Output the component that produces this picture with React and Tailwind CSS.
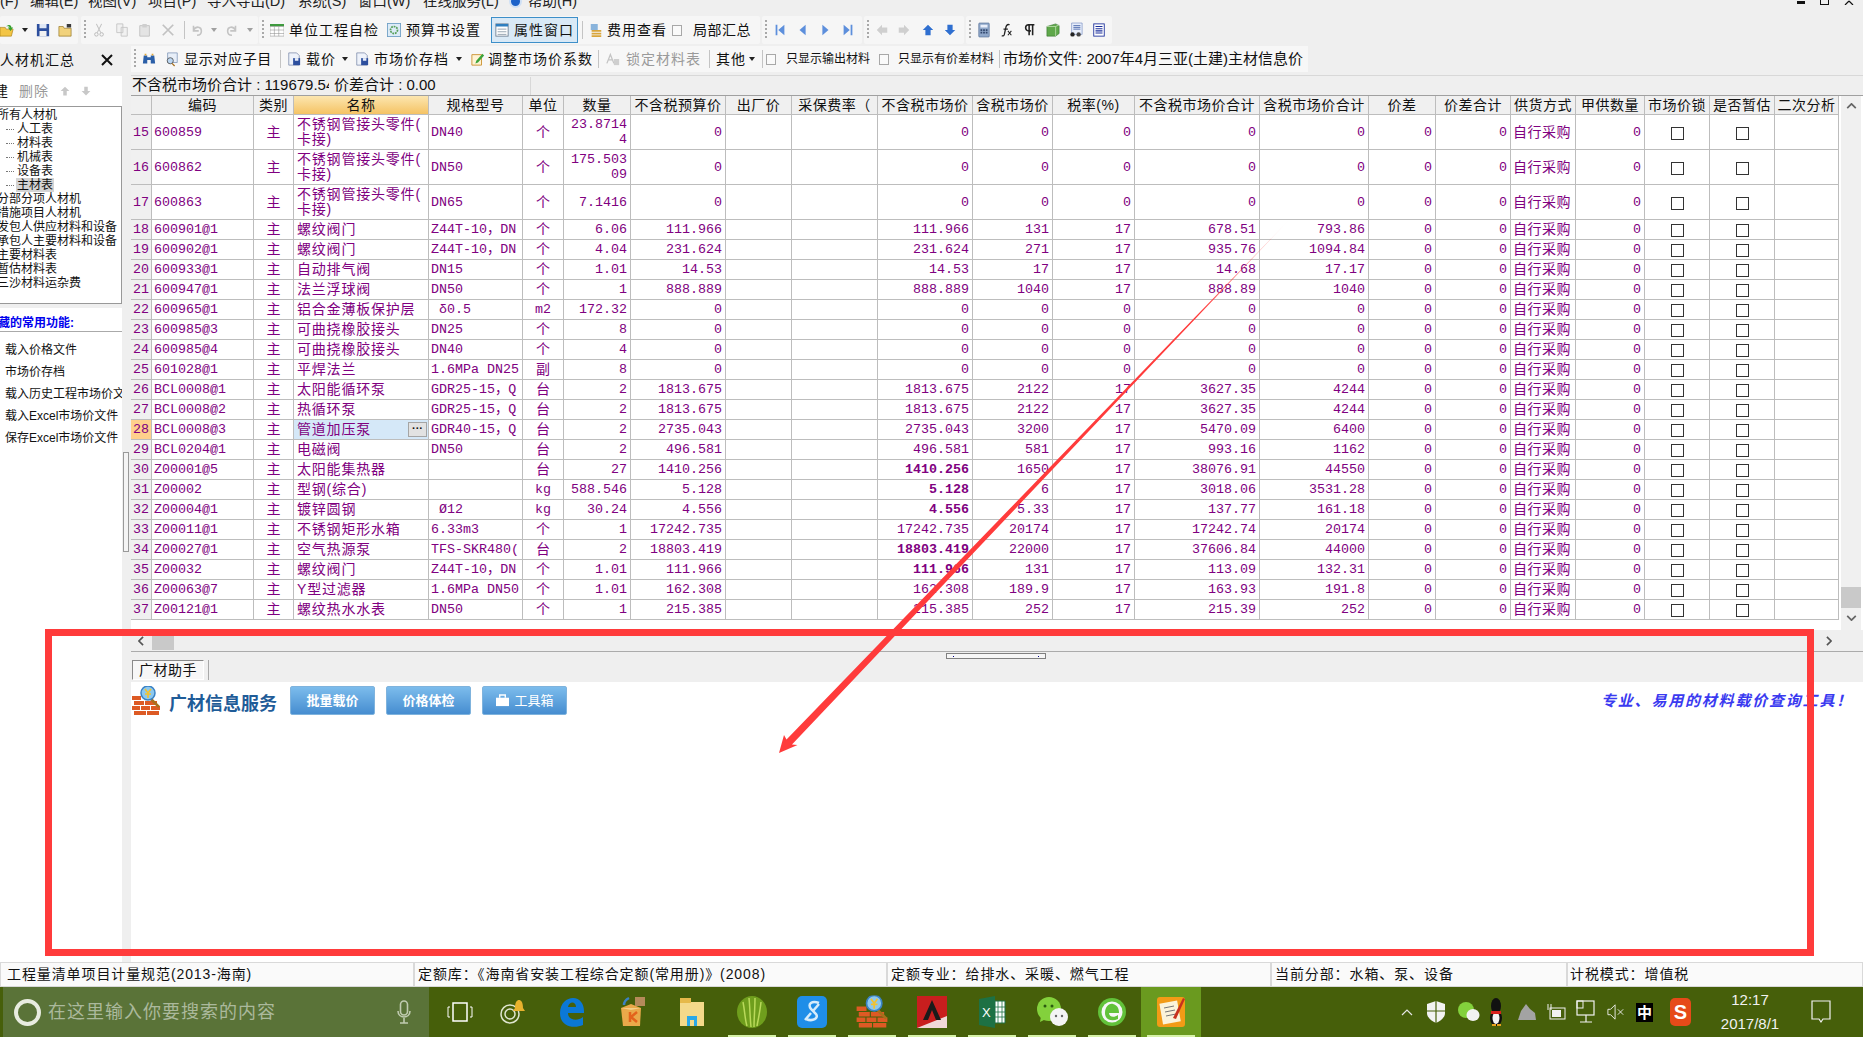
import React from "react";

const Ic = ({ children, className = "" }) => (
  <svg viewBox="0 0 16 16" className={"w-[14px] h-[16px] shrink-0 " + className}>{children}</svg>
);
const Caret = ({ className = "" }) => (
  <svg viewBox="0 0 6 4" className={"w-[6px] h-[4px] shrink-0 " + className}><path d="M0 0h6L3 4z" fill="#222" /></svg>
);
const Grip = ({ className = "" }) => (
  <span className={"w-[2px] h-[20px] shrink-0 bg-[repeating-linear-gradient(to_bottom,#a8a8a8_0,#a8a8a8_2px,transparent_2px,transparent_4px)] " + className} />
);
const Sep = ({ className = "" }) => <span className={"w-px h-[18px] shrink-0 bg-[#c4c4c4] " + className} />;
const Box = ({ className = "" }) => <span className={"w-[10px] h-[11px] shrink-0 border border-[#a8a8a8] bg-[#fafafa] " + className} />;
const T = ({ className = "", look = "text-[14px] tracking-[1px] text-[#111]", children }) => <span className={"whitespace-nowrap shrink-0 " + look + " " + className}>{children}</span>;

const FolderIc = (p) => <Ic {...p}><path d="M0 5h6l1 2h8l-2 8H0z" fill="#f3c545" stroke="#a67c12" strokeWidth=".7" /><path d="M7 4c3-3 6-2 6 1h2l-3 4-3-4h2c0-1-2-2-4-1z" fill="#37a12d" /></Ic>;
const SaveIc = (p) => <Ic {...p}><path d="M1 1h14v14H1z" fill="#2d4f9e" /><path d="M4 1h8v5H4z" fill="#dfe7f5" /><path d="M4 9h8v6H4z" fill="#f2f2f2" /></Ic>;
const OpenIc = (p) => <Ic {...p}><path d="M1 4h5l1 2h8v9H1z" fill="#f1d27c" stroke="#8a6a18" strokeWidth=".7" /><path d="M10 1h5v4h-5z" fill="#3a3a3a" /></Ic>;
const Scissors = (p) => <Ic {...p}><path d="M5 1l5 10M11 1L6 11" stroke="#c0c0c0" strokeWidth="1.2" fill="none" /><circle cx="5" cy="13" r="2" fill="none" stroke="#b5b5b5" /><circle cx="11" cy="13" r="2" fill="none" stroke="#b5b5b5" /></Ic>;
const CopyIc = (p) => <Ic {...p}><path d="M2 1h7v10H2zM7 5h7v10H7z" fill="#f1f1f1" stroke="#c4c4c4" /></Ic>;
const PasteIc = (p) => <Ic {...p}><path d="M2 3h11v12H2z" fill="#e4e4e4" stroke="#c0c0c0" /><path d="M5 1h5v4H5z" fill="#cfcfcf" /></Ic>;
const CloseIc = (p) => <Ic {...p}><path d="M2 2l12 12M14 2L2 14" stroke="#c2c2c2" strokeWidth="2" /></Ic>;
const UndoIc = (p) => <Ic {...p}><path d="M4 3v6h6M4 8c3-5 9-4 9 1s-3 5-5 5" fill="none" stroke="#c4c4c4" strokeWidth="1.8" /></Ic>;
const RedoIc = (p) => <Ic {...p}><path d="M12 3v6H6M12 8C9 3 3 4 3 9s3 5 5 5" fill="none" stroke="#c4c4c4" strokeWidth="1.8" /></Ic>;
const GridIc = (p) => <Ic {...p}><path d="M0 1h16v3H0z" fill="#3f9a3f" /><path d="M0 4h16v11H0z" fill="#fff" stroke="#8a8a8a" strokeWidth=".6" /><path d="M5 4v11M10 4v11M0 8h16M0 12h16" stroke="#8a8a8a" strokeWidth=".6" /></Ic>;
const GearIc = (p) => <Ic {...p}><rect x=".5" y=".5" width="15" height="15" fill="#dcebf7" stroke="#6f9fc5" /><circle cx="8" cy="8" r="4" fill="none" stroke="#58a05a" strokeWidth="2" strokeDasharray="2 1" /></Ic>;
const WinIc = (p) => <Ic {...p}><rect x="1" y="1" width="14" height="14" fill="#fff" stroke="#6d7f90" /><path d="M1 1h14v3H1z" fill="#2e7fc0" /><path d="M3 7h10M3 10h10M3 13h10" stroke="#8a9aa8" /></Ic>;
const CoinIc = (p) => <Ic {...p}><path d="M2 1h8v7H2z" fill="#8ab4dc" /><path d="M3 8h11v2H3zM3 11h11v2H3zM3 14h11v2H3z" fill="#d9a53a" /></Ic>;
const Nav = ({ d, c = "#5d8fdc", ...p }) => <Ic {...p}><path d={d} fill={c} /></Ic>;
const CalcIc = (p) => <Ic {...p}><rect x="2" y="0" width="12" height="16" rx="1" fill="#8fa7c9" stroke="#4f6a93" strokeWidth=".7" /><path d="M4 2h8v3H4z" fill="#e8eefa" /><path d="M4 7h2v2H4zM7 7h2v2H7zM10 7h2v2h-2zM4 10h2v2H4zM7 10h2v2H7zM10 10h2v2h-2z" fill="#33486e" /></Ic>;
const FxIc = (p) => <Ic {...p}><path d="M11 2c-3-1-4 1-4.500 4L5 13c-.5 2-2 2-3 1.500M4 7h5" stroke="#222" strokeWidth="1.500" fill="none" /><path d="M9 9l4 5M13 9l-4 5" stroke="#222" strokeWidth="1.200" /></Ic>;
const PilcrowIc = (p) => <Ic {...p}><path d="M7 2v12M11 2v12M13 2H6.500a3.500 3.500 0 0 0 0 7H9" stroke="#222" strokeWidth="1.800" fill="none" /></Ic>;
const CubeIc = (p) => <Ic {...p}><path d="M1 4l10-3 4 2v9l-4 3H1z" fill="#5fa84a" stroke="#2f6b2a" strokeWidth=".6" /><path d="M1 4h10v11M11 4l4-2" stroke="#cfe8c0" strokeWidth=".8" fill="none" /></Ic>;
const DocIc = (p) => <Ic {...p}><path d="M3 0h12v13H3z" fill="#e8eefb" stroke="#6c86bd" strokeWidth=".7" /><path d="M5 3h8M5 5h8M5 7h8" stroke="#4462a8" /><circle cx="4" cy="13" r="2.500" fill="#222" /><circle cx="11" cy="13" r="2.500" fill="#444" /></Ic>;
const ListIc = (p) => <Ic {...p}><rect x="2" y="1" width="12" height="14" fill="#fff" stroke="#1b2f9b" /><path d="M4 4h8M4 6.500h8M4 9h8M4 11.500h8" stroke="#1b2f9b" strokeWidth="1.200" /></Ic>;
const Binoc = (p) => <Ic {...p}><path d="M2 4h4v9H1zM10 4h4l1 9h-5zM6 6h4v3H6z" fill="#2b5fa8" /><path d="M3 2h2v2H3zM11 2h2v2h-2z" fill="#e0a63a" /></Ic>;
const FindDoc = (p) => <Ic {...p}><path d="M3 1h11v11H3z" fill="#e7eef8" stroke="#5f7ba5" strokeWidth=".7" /><circle cx="6" cy="10" r="3.500" fill="#bcd7f2" stroke="#555" /><path d="M8 13l3 3" stroke="#a8701c" strokeWidth="1.500" /></Ic>;
const DiskDoc = (p) => <Ic {...p}><path d="M2 1h9l3 3v11H2z" fill="#eef2fa" stroke="#5d6f96" strokeWidth=".7" /><path d="M7 7h8v8H7z" fill="#2d4f9e" /><path d="M9 7h4v3H9z" fill="#e8eefb" /></Ic>;
const EditDoc = (p) => <Ic {...p}><path d="M1 3h11v12H1z" fill="#fff3d4" stroke="#c98f2b" /><path d="M6 10l7-8 2 2-7 8-3 1z" fill="#3da43a" /></Ic>;
const GreyAb = (p) => <Ic {...p}><path d="M1 13L5 3l4 10M3 9h4" stroke="#c4c4c4" strokeWidth="1.500" fill="none" /><rect x="9" y="8" width="6" height="7" fill="#cfcfcf" /></Ic>;

const widths = ["w-[21px]", "w-[102px]", "w-[40px]", "w-[135px]", "w-[94px]", "w-[41px]", "w-[67px]", "w-[95px]", "w-[66px]", "w-[86px]", "w-[95px]", "w-[80px]", "w-[82px]", "w-[125px]", "w-[109px]", "w-[67px]", "w-[75px]", "w-[65px]", "w-[69px]", "w-[65px]", "w-[65px]", "w-[64px]"];
const heads = ["", "编码", "类别", "名称", "规格型号", "单位", "数量", "不含税预算价", "出厂价", "采保费率（", "不含税市场价", "含税市场价", "税率(%)", "不含税市场价合计", "含税市场价合计", "价差", "价差合计", "供货方式", "甲供数量", "市场价锁", "是否暂估", "二次分析"];

const TG = "Z44T-10，DN";
const rows = [
  [15, "600859", "不锈钢管接头零件(\n卡接)", "DN40", "个", "23.8714\n4", "0", "0", "0", "0", "0", "0"],
  [16, "600862", "不锈钢管接头零件(\n卡接)", "DN50", "个", "175.503\n09", "0", "0", "0", "0", "0", "0"],
  [17, "600863", "不锈钢管接头零件(\n卡接)", "DN65", "个", "7.1416", "0", "0", "0", "0", "0", "0"],
  [18, "600901@1", "螺纹阀门", TG, "个", "6.06", "111.966", "111.966", "131", "17", "678.51", "793.86"],
  [19, "600902@1", "螺纹阀门", TG, "个", "4.04", "231.624", "231.624", "271", "17", "935.76", "1094.84"],
  [20, "600933@1", "自动排气阀", "DN15", "个", "1.01", "14.53", "14.53", "17", "17", "14.68", "17.17"],
  [21, "600947@1", "法兰浮球阀", "DN50", "个", "1", "888.889", "888.889", "1040", "17", "888.89", "1040"],
  [22, "600965@1", "铝合金薄板保护层", " δ0.5", "m2", "172.32", "0", "0", "0", "0", "0", "0"],
  [23, "600985@3", "可曲挠橡胶接头", "DN25", "个", "8", "0", "0", "0", "0", "0", "0"],
  [24, "600985@4", "可曲挠橡胶接头", "DN40", "个", "4", "0", "0", "0", "0", "0", "0"],
  [25, "601028@1", "平焊法兰", "1.6MPa DN25", "副", "8", "0", "0", "0", "0", "0", "0"],
  [26, "BCL0008@1", "太阳能循环泵", "GDR25-15，Q", "台", "2", "1813.675", "1813.675", "2122", "17", "3627.35", "4244"],
  [27, "BCL0008@2", "热循环泵", "GDR25-15，Q", "台", "2", "1813.675", "1813.675", "2122", "17", "3627.35", "4244"],
  [28, "BCL0008@3", "管道加压泵", "GDR40-15，Q", "台", "2", "2735.043", "2735.043", "3200", "17", "5470.09", "6400"],
  [29, "BCL0204@1", "电磁阀", "DN50", "台", "2", "496.581", "496.581", "581", "17", "993.16", "1162"],
  [30, "Z00001@5", "太阳能集热器", "", "台", "27", "1410.256", "*1410.256", "1650", "17", "38076.91", "44550"],
  [31, "Z00002", "型钢(综合)", "", "kg", "588.546", "5.128", "*5.128", "6", "17", "3018.06", "3531.28"],
  [32, "Z00004@1", "镀锌圆钢", " Ø12", "kg", "30.24", "4.556", "*4.556", "5.33", "17", "137.77", "161.18"],
  [33, "Z00011@1", "不锈钢矩形水箱", "6.33m3", "个", "1", "17242.735", "17242.735", "20174", "17", "17242.74", "20174"],
  [34, "Z00027@1", "空气热源泵", "TFS-SKR480(", "台", "2", "18803.419", "*18803.419", "22000", "17", "37606.84", "44000"],
  [35, "Z00032", "螺纹阀门", TG, "个", "1.01", "111.966", "*111.966", "131", "17", "113.09", "132.31"],
  [36, "Z00063@7", "Y型过滤器", "1.6MPa DN50", "个", "1.01", "162.308", "162.308", "189.9", "17", "163.93", "191.8"],
  [37, "Z00121@1", "螺纹热水水表", "DN50", "个", "1", "215.385", "215.385", "252", "17", "215.39", "252"],
];

const cell = "p-0 border-r border-b border-[#bdbdbd] overflow-hidden align-middle";
const mono = "font-['Liberation_Mono','Noto_Sans_CJK_SC',monospace] text-[13.33px]";
const cjk = "text-[14px] tracking-[0.8px]";

const Num = ({ v }) => {
  const bold = v.startsWith("*");
  return <td className={cell + " text-right pr-[3px] whitespace-pre-line " + mono + (bold ? " font-bold" : "")}>{bold ? v.slice(1) : v}</td>;
};
const Check = () => (
  <td className={cell + " text-center"}><span className="inline-block align-middle w-[13px] h-[13px] border border-[#333] bg-white" /></td>
);

const Row = ({ r }) => {
  const [n, code, name, spec, unit, qty, bud, mkt, tax, rate, s1, s2] = r;
  const sel = n === 28;
  const tall = n < 18;
  return (
    <tr className={tall ? "h-[35px]" : "h-[20px]"}>
      <td className={cell + " text-center " + mono + (sel ? " bg-[#ffd08c]" : " bg-[#f0f0f0]")}>{n}</td>
      <td className={cell + " pl-[2px] whitespace-nowrap " + mono}>{code}</td>
      <td className={cell + " text-center text-[14px]"}>主</td>
      <td className={cell + " pl-[3px] whitespace-pre-line " + cjk + (sel ? " bg-[#d5e8f8]" : "")}>
        {sel ? (
          <div className="flex items-center justify-between pr-px"><span>{name}</span><span className="w-[19px] h-[15px] bg-[#e2e2e2] border border-[#a5a5a5] text-[#111] text-[11px] leading-[10px] text-center font-bold tracking-normal">···</span></div>
        ) : name}
      </td>
      <td className={cell + " pl-[2px] whitespace-pre " + mono}>{spec}</td>
      <td className={cell + " text-center " + (unit.length > 1 ? mono : "text-[14px]")}>{unit}</td>
      <Num v={qty} />
      <Num v={bud} />
      <td className={cell} />
      <td className={cell} />
      <Num v={mkt} />
      <Num v={tax} />
      <Num v={rate} />
      <Num v={s1} />
      <Num v={s2} />
      <Num v="0" />
      <Num v="0" />
      <td className={cell + " pl-[2px] whitespace-nowrap text-[14px] tracking-[0.5px]"}>自行采购</td>
      <Num v="0" />
      <Check />
      <Check />
      <td className={cell} />
    </tr>
  );
};

const Grid = () => (
  <table className="table-fixed border-separate border-spacing-0 w-[1708px] text-[#800080] leading-[15px] bg-white">
    <colgroup>{widths.map((w, i) => <col key={i} className={w} />)}</colgroup>
    <thead>
      <tr className="h-[19px]">
        {heads.map((h, i) => (
          <th key={i} className={"p-0 font-normal text-[14px] tracking-[0.5px] text-[#111] whitespace-nowrap overflow-hidden text-center border-r border-b border-[#bdbdbd] " + (i === 3 ? "bg-[linear-gradient(to_bottom,#fce6b0,#f5c364)]" : "bg-[#f0f0f0]")}>{h}</th>
        ))}
      </tr>
    </thead>
    <tbody>{rows.map((r) => <Row key={r[0]} r={r} />)}</tbody>
  </table>
);

const Menu = () => (
  <div className="h-[16px] overflow-hidden relative flex text-[14.5px] leading-[14px] text-[#222] whitespace-nowrap">
    <div className="flex -mt-[6px]">
      <span className="w-[30px]">(F)</span>
      <span className="w-[58px]">编辑(E)</span>
      <span className="w-[60px]">视图(V)</span>
      <span className="w-[59px]">项目(P)</span>
      <span className="w-[91px]">导入导出(D)</span>
      <span className="w-[60px]">系统(S)</span>
      <span className="w-[65px]">窗口(W)</span>
      <span className="w-[86px]">在线服务(L)</span>
      <span className="w-[13px] h-[13px] rounded-full bg-[#1c62c9] border-2 border-[#cfe0f5] mr-[6px] mt-[1px]" />
      <span>帮助(H)</span>
    </div>
    <div className="absolute right-[9px] top-0 flex items-start gap-[15px]">
      <span className="w-[8px] h-[3px] mt-px bg-[#111]" />
      <span className="w-[9px] h-[5px] border border-t-0 border-[#111]" />
      <svg viewBox="0 0 10 5" className="w-[10px] h-[5px]"><path d="M1 5l4-4M9 5L5 1" stroke="#111" strokeWidth="1.200" /></svg>
    </div>
  </div>
);

const band = "h-[28px] bg-[#f6f6f6] flex items-center shrink-0 overflow-hidden rounded-[2px]";

const Toolbar1 = () => (
  <div className="h-[30px] flex">
    <div className={band + " w-[78px]"}>
      <FolderIc /><Caret className="ml-[8px]" /><SaveIc className="ml-[8px]" /><OpenIc className="ml-[8px]" />
    </div>
    <div className={band + " w-[177px] ml-[3px]"}>
      <Grip className="ml-[3px]" /><Scissors className="ml-[6px]" /><CopyIc className="ml-[9px]" /><PasteIc className="ml-[9px]" /><CloseIc className="ml-[9px]" />
      <Sep className="ml-[9px]" /><UndoIc className="ml-[5px]" /><Caret className="ml-[7px] opacity-40" /><RedoIc className="ml-[8px]" /><Caret className="ml-[8px] opacity-40" />
    </div>
    <div className={band + " w-[501px] ml-px"}>
      <Grip className="ml-[3px]" /><GridIc className="ml-[6px]" /><T className="ml-[5px]">单位工程自检</T>
      <GearIc className="ml-[8px]" /><T className="ml-[5px]">预算书设置</T>
      <div className="ml-[10px] w-[87px] h-[26px] bg-[#d9e9f6] border border-[#3d8fc9] flex items-center shrink-0">
        <WinIc className="ml-[3px]" /><T className="ml-[5px]">属性窗口</T>
      </div>
      <Sep className="ml-[4px]" /><CoinIc className="ml-[6px]" /><T className="ml-[4px]">费用查看</T>
      <Box className="ml-[5px]" /><T className="ml-[11px]" look="text-[14px] tracking-[0.5px] text-[#111]">局部汇总</T>
    </div>
    <div className={band + " w-[100px] ml-[2px]"}>
      <Grip className="ml-[3px]" />
      <Nav d="M3 2h2v12H3zM13 2v12L6 8z" className="ml-[6px]" />
      <Nav d="M11 2v12L4 8z" className="ml-[9px]" />
      <Nav d="M5 2v12l7-6z" className="ml-[8px]" />
      <Nav d="M11 2h2v12h-2zM3 2v12l7-6z" className="ml-[9px]" />
    </div>
    <div className={band + " w-[100px] ml-[2px]"}>
      <Grip className="ml-[3px]" />
      <Nav c="#cfcfcf" d="M8 2v3h6v6H8v3L2 8z" className="ml-[6px]" />
      <Nav c="#cfcfcf" d="M8 2v3H2v6h6v3l6-6z" className="ml-[8px]" />
      <Nav c="#2f6fd0" d="M8 2l6 6h-3v6H5V8H2z" className="ml-[10px]" />
      <Nav c="#2f6fd0" d="M8 14l6-6h-3V2H5v6H2z" className="ml-[8px]" />
    </div>
    <div className={band + " w-[146px] ml-[2px]"}>
      <Grip className="ml-[3px]" /><CalcIc className="ml-[6px]" /><FxIc className="ml-[9px]" /><PilcrowIc className="ml-[9px]" /><CubeIc className="ml-[9px]" /><DocIc className="ml-[9px]" /><ListIc className="ml-[9px]" />
    </div>
  </div>
);

const small = "text-[12px] tracking-normal text-[#111]";

const Toolbar2 = () => (
  <div className="h-[29px] flex items-start">
    <div className="h-[26px] w-[1177px] bg-[#f7f7f7] flex items-center overflow-hidden">
      <Grip className="ml-[3px]" /><Binoc className="ml-[6px]" /><FindDoc className="ml-[9px]" /><T className="ml-[5px]" look="text-[14px] tracking-[0.67px] text-[#111]">显示对应子目</T>
      <Sep className="ml-[8px]" /><DiskDoc className="ml-[6px]" /><T className="ml-[5px]">载价</T><Caret className="ml-[6px]" />
      <DiskDoc className="ml-[7px]" /><T className="ml-[5px]">市场价存档</T><Caret className="ml-[7px]" />
      <EditDoc className="ml-[9px]" /><T className="ml-[3px]">调整市场价系数</T>
      <Sep className="ml-[5px]" /><GreyAb className="ml-[7px]" /><T className="ml-[6px]" look="text-[14px] tracking-[1px] text-[#9a9a9a]">锁定材料表</T>
      <Sep className="ml-[8px]" /><T className="ml-[6px]">其他</T><Caret className="ml-[3px]" />
      <Sep className="ml-[7px]" /><Box className="ml-[3px]" /><T className="ml-[10px]" look={small}>只显示输出材料</T>
      <Box className="ml-[9px]" /><T className="ml-[9px]" look={small}>只显示有价差材料</T>
      <Sep className="ml-[5px]" /><span className="ml-[3px] whitespace-nowrap text-[15px] text-[#111]">市场价文件: 2007年4月三亚(土建)主材信息价</span>
    </div>
  </div>
);

const SumLine = () => (
  <div className="h-[20px] border-t border-[#d8d8d8] flex items-center text-[15px] text-[#111] whitespace-nowrap">
    <span className="w-[198px] overflow-hidden pl-px shrink-0">不含税市场价合计 : 119679.54</span>
    <span className="ml-[5px] w-[196px] shrink-0">价差合计 : 0.00</span>
    <span className="w-px h-[18px] bg-[#d8d8d8]" />
  </div>
);

const Tree = () => {
  const top = ["所有人材机"];
  const kids = ["人工表", "材料表", "机械表", "设备表", "主材表"];
  const rest = ["分部分项人材机", "措施项目人材机", "发包人供应材料和设备", "承包人主要材料和设备", "主要材料表", "暂估材料表", "三沙材料运杂费"];
  return (
    <div className="h-[198px] border border-l-0 border-[#999] bg-white text-[12px] leading-[14px] text-[#111] pt-[1px] overflow-hidden whitespace-nowrap">
      {top.map((t) => <div key={t} className="-ml-[3px]">{t}</div>)}
      {kids.map((t, i) => (
        <div key={t} className="flex items-center h-[14px]">
          <span className="ml-[6px] w-[8px] border-t border-dotted border-[#777]" />
          <span className={"ml-[2px] px-px " + (i === 4 ? "bg-[#d4d4d4]" : "")}>{t}</span>
        </div>
      ))}
      {rest.map((t) => <div key={t} className="-ml-[3px]">{t}</div>)}
    </div>
  );
};

const Left = () => (
  <div className="w-[131px] shrink-0 flex">
    <div className="w-[122px] shrink-0 flex flex-col">
      <div className="h-[30px] flex items-start pt-[4px] text-[14px] tracking-[1px] text-[#111] whitespace-nowrap relative w-[131px]">
        <span>人材机汇总</span>
        <svg viewBox="0 0 12 12" className="absolute left-[101px] top-[8px] w-[12px] h-[12px]"><path d="M1 1l10 10M11 1L1 11" stroke="#111" strokeWidth="2" /></svg>
      </div>
      <div className="h-[30px] bg-white flex items-center text-[14px] whitespace-nowrap">
        <span className="-ml-[6px] text-[#111]">建</span>
        <span className="ml-[11px] text-[#999] tracking-[1px]">删除</span>
        <Nav c="#c8c8c8" d="M8 3l5 5h-3v5H6V8H3z" className="ml-[9px]" />
        <Nav c="#c8c8c8" d="M8 13l5-5h-3V3H6v5H3z" className="ml-[7px]" />
      </div>
      <Tree />
      <div className="h-[4px] bg-[#efefef]" />
      <div className="flex-1 bg-white overflow-hidden whitespace-nowrap text-[12px] text-[#111]">
        <div className="h-[24px] border-b border-[#aaa] flex items-end text-[#0000ee] font-bold -ml-[4px]">
          <span className="pl-[2px] leading-[15px]">藏的常用功能:</span>
        </div>
        <div className="pl-[5px] flex flex-col pt-[7px] leading-[22px]">
          <span>载入价格文件</span>
          <span>市场价存档</span>
          <span>载入历史工程市场价文件</span>
          <span>载入Excel市场价文件</span>
          <span>保存Excel市场价文件</span>
        </div>
      </div>
    </div>
    <div className="w-[9px] shrink-0 relative">
      <span className="absolute left-px top-[406px] w-[6px] h-[100px] border border-[#999] bg-[#f4f4f4]" />
    </div>
  </div>
);

const VScroll = () => (
  <div className="w-[24px] shrink-0 flex flex-col items-center bg-[#f0f0f0] border-r-2 border-l-2 border-white relative h-[534px]">
    <svg viewBox="0 0 12 7" className="w-[11px] h-[6px] mt-[7px]"><path d="M1 6l5-5 5 5" fill="none" stroke="#666" strokeWidth="2" /></svg>
    <span className="absolute left-0 right-0 top-[491px] h-[21px] bg-[#c9c9c9]" />
    <svg viewBox="0 0 12 7" className="w-[11px] h-[6px] absolute top-[519px]"><path d="M1 1l5 5 5-5" fill="none" stroke="#666" strokeWidth="2" /></svg>
  </div>
);

const HScroll = () => (
  <div className="h-[22px] border-b border-[#ababab] flex items-end relative">
    <svg viewBox="0 0 7 12" className="absolute left-[7px] top-[6px] w-[6px] h-[10px]"><path d="M6 1L1 6l5 5" fill="none" stroke="#555" strokeWidth="2" /></svg>
    <span className="absolute left-[21px] top-[6px] w-[22px] h-[14px] bg-[#c9c9c9]" />
    <svg viewBox="0 0 7 12" className="absolute left-[1695px] top-[6px] w-[6px] h-[10px]"><path d="M1 1l5 5-5 5" fill="none" stroke="#555" strokeWidth="2" /></svg>
  </div>
);

const Btn = ({ children, className = "", weight = "font-bold" }) => (
  <div className={"w-[85px] h-[29px] rounded-[2px] bg-[linear-gradient(to_bottom,#7cbcec,#468dd0)] border border-[#7fb3dd] text-white text-[13px] flex items-center justify-center gap-[4px] whitespace-nowrap shrink-0 " + weight + " " + className}>{children}</div>
);

const Logo = () => (
  <svg viewBox="0 0 30 30" className="w-[30px] h-[30px] shrink-0">
    <path d="M1 10h9v4H1zM3 15h10v4H3zM1 20h8v4H1zM10 20h9v4h-9zM20 20h9v4h-9zM14 15h12v4H14zM3 25h12v4H3zM16 25h12v4H16z" fill="#dd5a24" />
    <path d="M19 12l9 9" stroke="#a8701c" strokeWidth="2.500" />
    <circle cx="17" cy="7" r="7" fill="#8cc8ef" stroke="#3a82c4" strokeWidth="1.500" />
    <path d="M14 3l3 4 3-4M17 7v5M14 8h6" stroke="#f2c230" strokeWidth="1.600" fill="none" />
  </svg>
);

const Bottom = () => (
  <div className="flex-1 flex flex-col min-h-0">
    <div className="h-[8px] relative">
      <span className="absolute left-[815px] top-px w-[100px] h-[6px] border border-[#808080] bg-[#f6f6f6] flex justify-between px-[6px] items-center">
        <i className="w-px h-px bg-[#00008b]" /><i className="w-px h-px bg-[#00008b]" />
      </span>
    </div>
    <div className="h-[22px] flex items-start pl-px">
      <div className="w-[72px] h-[20px] border border-[#8a8a8a] border-b-white border-r-white bg-[#f7f7f7] text-[14px] tracking-[0.5px] text-[#111] flex items-center justify-center">广材助手</div>
      <span className="ml-[4px] w-px h-[20px] bg-[#a8a8a8]" />
    </div>
    <div className="flex-1 bg-white flex items-start pt-[4px] pr-[10px] whitespace-nowrap">
      <Logo />
      <span className="ml-[8px] mt-[5px] text-[18px] font-bold text-[#1f5c98]">广材信息服务</span>
      <Btn className="ml-[13px]">批量载价</Btn>
      <Btn className="ml-[11px]">价格体检</Btn>
      <Btn className="ml-[11px]" weight="font-normal">
        <svg viewBox="0 0 16 14" className="w-[15px] h-[13px]"><path d="M1 4h14v9H1z" fill="#fff" /><path d="M5 4V1h6v3" fill="none" stroke="#fff" strokeWidth="1.500" /></svg>
        工具箱
      </Btn>
      <span className="ml-auto mt-[4px] text-[15px] italic font-bold tracking-[1.800px] text-[#3a3af0]">专业、易用的材料载价查询工具！</span>
    </div>
  </div>
);

const StatusBar = () => {
  const items = [["w-[414px]", "pl-[6px]", "工程量清单项目计量规范(2013-海南)"], ["w-[473px]", "pl-[3px]", "定额库：《海南省安装工程综合定额(常用册)》(2008)"], ["w-[384px]", "pl-[3px]", "定额专业：给排水、采暖、燃气工程"], ["w-[296px]", "pl-[3px]", "当前分部：水箱、泵、设备"], ["w-[296px]", "pl-[2px]", "计税模式：增值税"]];
  return (
    <div className="h-[25px] flex text-[14px] tracking-[0.9px] text-[#111] whitespace-nowrap bg-[#efefef]">
      {items.map(([w, p, t]) => <div key={t} className={w + " " + p + " h-full border border-[#d9d9d9] bg-[#fafafa] flex items-center shrink-0 overflow-hidden"}>{t}</div>)}
    </div>
  );
};

const Tile = ({ children, active, line, className = "", w = "w-[60px]" }) => (
  <div className={w + " h-full flex items-center justify-center shrink-0 relative " + (active ? "bg-[#6a9a1f] " : "") + className}>
    {children}
    {line && <span className="absolute bottom-0 left-[6px] right-[6px] h-[2px] bg-[#d6f2a8]" />}
  </div>
);
const TI = ({ children }) => <svg viewBox="0 0 32 32" className="w-[32px] h-[32px]">{children}</svg>;

const Taskbar = () => (
  <div className="h-[50px] bg-[#465f0a] flex items-stretch text-white whitespace-nowrap">
    <div className="ml-[3px] w-[426px] bg-[#5a7338] flex items-center shrink-0">
      <span className="ml-[11px] w-[27px] h-[27px] rounded-full border-[4px] border-[#e8ece0]" />
      <span className="ml-[7px] text-[18px] tracking-[1px] text-[#abb99c]">在这里输入你要搜索的内容</span>
      <svg viewBox="0 0 14 24" className="ml-auto mr-[18px] w-[14px] h-[24px]"><rect x="3.500" y="1" width="7" height="14" rx="3.500" fill="none" stroke="#c0cbb0" strokeWidth="1.600" /><path d="M1 11c0 8 12 8 12 0M7 18v5M3 23h8" fill="none" stroke="#c0cbb0" strokeWidth="1.600" /></svg>
    </div>
    <Tile className="ml-px">
      <svg viewBox="0 0 26 24" className="w-[26px] h-[24px]"><rect x="6" y="3" width="14" height="18" fill="none" stroke="#fff" strokeWidth="1.500" /><path d="M3 7H1v10h2M23 7h2v10h-2" fill="none" stroke="#fff" /></svg>
    </Tile>
    <Tile w="w-[52px]" className="pr-[6px]">
      <TI><circle cx="13" cy="18" r="9" fill="none" stroke="#dfe5cf" strokeWidth="1.500" /><circle cx="13" cy="18" r="5" fill="none" stroke="#dfe5cf" strokeWidth="1.500" /><path d="M18 12c0-6 2-8 4-8s4 2 4 8l2 3H16z" fill="#e8b22d" /></TI>
    </Tile>
    <Tile w="w-[60px]">
      <TI><path d="M4 17C4 7 11 2 17 2c7 0 11 6 11 13v2H12c0 7 9 9 15 4v8c-9 4-23 2-23-12zm8-6h8c0-6-7-6-8 0z" fill="#0b78d6" /></TI>
    </Tile>
    <Tile>
      <TI><path d="M5 12l10-4 10 4-1 18H7z" fill="#eaa94a" /><path d="M5 12l10 2 10-2" fill="#f3cf86" /><path d="M14 16v10M21 16l-6 5 6 5" stroke="#e3631c" strokeWidth="2.500" fill="none" /><path d="M19 1h10v9H19z" fill="#b58a5a" /><path d="M8 9c0-4 3-6 5-7" stroke="#3b82c4" strokeWidth="2.500" fill="none" /></TI>
    </Tile>
    <Tile>
      <TI><path d="M4 6h24v24H4z" fill="#f4d98a" /><path d="M4 2h11v5H4z" fill="#e6b94a" /><path d="M11 20h10v10H11z" fill="#2aa8e8" /><path d="M14 24h4v6h-4z" fill="#f4d98a" /></TI>
    </Tile>
    <Tile line>
      <svg viewBox="0 0 30 32" className="w-[30px] h-[32px]"><ellipse cx="15" cy="16" rx="15" ry="16" fill="#6f9e1d" /><path d="M6 6c2 10 2 18 4 24M12 2c1 10 1 20 2 29M18 2c0 10-1 20-1 29M24 6c-1 10-3 18-4 24" stroke="#b9d95a" strokeWidth="1.500" fill="none" /></svg>
    </Tile>
    <Tile line>
      <svg viewBox="0 0 30 32" className="w-[30px] h-[32px]"><rect width="30" height="32" rx="5" fill="#1f8ee8" /><path d="M22 7c-7-3-12 1-8 6l5 5c3 4-3 8-10 5M8 24l6-7M22 8l-6 7" fill="none" stroke="#d6ecfb" strokeWidth="2.500" /></svg>
    </Tile>
    <Tile line><span className="scale-[1.100]"><Logo /></span></Tile>
    <Tile line>
      <svg viewBox="0 0 30 32" className="w-[30px] h-[32px]"><path d="M0 0h30v32H0z" fill="#f0d8d8" /><path d="M0 0h30v20L0 32z" fill="#c81e1e" /><path d="M15 4l9 20h-5l-4-10-4 10H6z" fill="#1b1b1b" /></svg>
    </Tile>
    <Tile line>
      <svg viewBox="0 0 30 32" className="w-[30px] h-[32px]"><path d="M2 3l16-3v32L2 29z" fill="#1d7144" /><path d="M18 5h10v22H18z" fill="#fff" stroke="#1d7144" /><path d="M21 5v22M25 5v22M18 11h10M18 16h10M18 21h10" stroke="#1d7144" strokeWidth=".8" /><text x="5" y="21" fill="#fff" fontSize="13" fontFamily="Liberation Sans">X</text></svg>
    </Tile>
    <Tile line>
      <TI><ellipse cx="13" cy="13" rx="12" ry="12" fill="#83d13c" /><path d="M5 20l-1 6 6-3z" fill="#83d13c" /><ellipse cx="23" cy="21" rx="9" ry="9" fill="#f4f4f4" /><circle cx="9" cy="10" r="1.500" fill="#2b5a10" /><circle cx="16" cy="10" r="1.500" fill="#2b5a10" /><circle cx="20" cy="20" r="1.200" fill="#666" /><circle cx="26" cy="20" r="1.200" fill="#666" /></TI>
    </Tile>
    <Tile line>
      <TI><circle cx="16" cy="16" r="14" fill="#62c23a" /><circle cx="16" cy="16" r="10.500" fill="#f7f7f7" /><path d="M9 17c0-7 5-10 8-9 4 1 6 4 6 9H13c0 4 5 5 9 2v4c-6 3-13 1-13-6z" fill="#62c23a" /></TI>
    </Tile>
    <Tile active line className="-ml-[1px]">
      <svg viewBox="0 0 30 32" className="w-[30px] h-[32px]"><rect x="1" y="1" width="28" height="30" rx="3" fill="#f29b16" /><rect x="5" y="6" width="18" height="21" fill="#fbf3d9" transform="rotate(-10 14 16)" /><path d="M8 12l10-2M9 16l10-2M10 20l10-2" stroke="#777" /><path d="M17 22L27 2l2 1-9 20z" fill="#c8321e" /></svg>
    </Tile>
    <div className="flex items-center shrink-0">
      <svg viewBox="0 0 12 7" className="ml-[200px] w-[12px] h-[7px] shrink-0"><path d="M1 6l5-5 5 5" fill="none" stroke="#e5e5e5" strokeWidth="1.200" /></svg>
      <svg viewBox="0 0 18 22" className="ml-[14px] w-[18px] h-[22px] shrink-0"><path d="M9 0l9 3v9c0 5-5 8-9 10-4-2-9-5-9-10V3z" fill="#f2f2f2" /><path d="M9 0v22M0 10h18" stroke="#465f0a" strokeWidth="1.200" /></svg>
      <svg viewBox="0 0 22 20" className="ml-[13px] w-[22px] h-[20px] shrink-0"><ellipse cx="8" cy="8" rx="8" ry="8" fill="#83d13c" /><ellipse cx="15" cy="13" rx="6.500" ry="6" fill="#f2f2f2" /></svg>
      <svg viewBox="0 0 16 30" className="ml-[8px] w-[16px] h-[30px] shrink-0"><ellipse cx="8" cy="9" rx="5" ry="8" fill="#111" /><ellipse cx="8" cy="21" rx="6" ry="8" fill="#111" /><ellipse cx="8" cy="21" rx="3.500" ry="6" fill="#f4f4f4" /><path d="M3 14h10v3H3z" fill="#d9211e" /><path d="M4 28h4M9 28h4" stroke="#e8a21c" strokeWidth="2" /></svg>
      <svg viewBox="0 0 20 18" className="ml-[13px] w-[20px] h-[18px] shrink-0"><path d="M1 17l3-9 5-7 4 5 5 4 1 7z" fill="#a3a3a3" /></svg>
      <svg viewBox="0 0 20 16" className="ml-[9px] w-[20px] h-[16px] shrink-0"><rect x="4" y="4" width="15" height="11" fill="none" stroke="#f2f2f2" /><rect x="6" y="6" width="9" height="7" fill="#f2f2f2" /><path d="M2 0v6M5 0v6" stroke="#f2f2f2" /></svg>
      <svg viewBox="0 0 20 24" className="ml-[10px] w-[20px] h-[24px] shrink-0"><rect x="1" y="1" width="17" height="14" fill="none" stroke="#f2f2f2" strokeWidth="1.200" /><path d="M10 15v7M4 22h12" stroke="#f2f2f2" strokeWidth="1.200" /><rect x="1" y="1" width="6" height="7" fill="none" stroke="#f2f2f2" /></svg>
      <svg viewBox="0 0 20 20" className="ml-[11px] w-[18px] h-[20px] shrink-0"><path d="M1 7h3l5-5v16l-5-5H1z" fill="none" stroke="#f2f2f2" /><path d="M12 7l6 6M18 7l-6 6" stroke="#f2f2f2" /></svg>
      <span className="ml-[11px] w-[17px] text-[15px] font-bold text-white bg-black leading-[19px] text-center shrink-0">中</span>
      <span className="ml-[17px] w-[21px] h-[28px] rounded-[5px] bg-[#e64a19] text-white font-bold text-[20px] leading-[28px] text-center shrink-0">S</span>
      <div className="ml-[27px] w-[64px] flex flex-col items-center shrink-0 text-[#f2f2f2] text-[15px] leading-[24px]">
        <span>12:17</span>
        <span>2017/8/1</span>
      </div>
      <svg viewBox="0 0 20 24" className="ml-[29px] w-[20px] h-[24px] shrink-0"><path d="M1 1h18v18h-7l-2 3-2-3H1z" fill="none" stroke="#f2f2f2" strokeWidth="1.200" /></svg>
    </div>
  </div>
);

export default function App() {
  return (
    <div className="relative w-[1863px] h-[1037px] overflow-hidden bg-[#efefef] font-['Liberation_Sans','Noto_Sans_CJK_SC',sans-serif]">
      <Menu />
      <Toolbar1 />
      <div className="h-[916px] flex">
        <Left />
        <div className="w-[1732px] shrink-0 flex flex-col">
          <Toolbar2 />
          <SumLine />
          <div className="flex border-t border-[#a0a0a0] h-[535px] bg-white">
            <div className="w-[1708px] shrink-0 overflow-hidden"><Grid /></div>
            <VScroll />
          </div>
          <HScroll />
          <Bottom />
        </div>
      </div>
      <StatusBar />
      <Taskbar />
      <div className="absolute left-[45px] top-[629px] w-[1769px] h-[327px] border-[7px] border-[#ff3b3b] pointer-events-none" />
      <svg viewBox="0 0 1863 1037" className="absolute left-0 top-0 w-[1863px] h-[1037px] pointer-events-none">
        <defs>
          <linearGradient id="fade" gradientUnits="userSpaceOnUse" x1="1289" y1="220" x2="1200" y2="313">
            <stop offset="0" stopColor="#ff3b3b" stopOpacity="0.1" />
            <stop offset="1" stopColor="#ff3b3b" />
          </linearGradient>
        </defs>
        <path d="M1289 220L792 744.500 797.500 745 779 753 784 735 786.500 739.500z" fill="url(#fade)" />
      </svg>
    </div>
  );
}
